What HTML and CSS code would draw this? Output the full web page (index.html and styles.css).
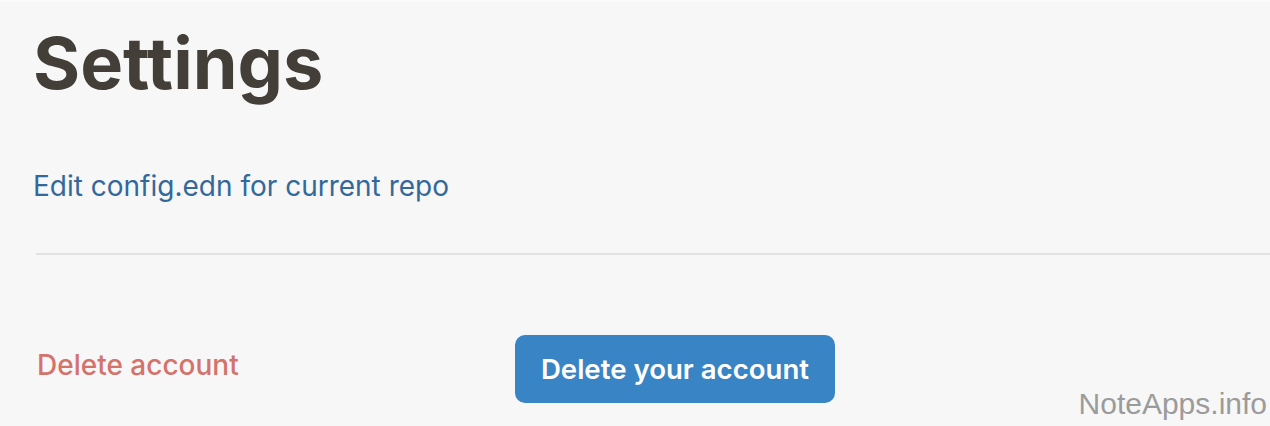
FILE: index.html
```html
<!DOCTYPE html>
<html lang="en">
<head>
<meta charset="utf-8">
<title>Settings</title>
<link rel="stylesheet" href="styles.css">
</head>
<body>
<div class="page">
  <h1 class="title">Settings</h1>
  <a class="config-link" href="#">Edit config.edn for current repo</a>
  <hr class="divider">
  <div class="row">
    <div class="row-label">Delete account</div>
    <button class="btn-danger" type="button">Delete your account</button>
  </div>
</div>
<div class="watermark">NoteApps.info</div>
</body>
</html>
```
FILE: styles.css
```css
html, body {
  margin: 0;
  padding: 0;
  height: 100%;
}
body {
  background: #f7f7f7;
  border-top: 2px solid #fbfbfb;
  box-sizing: border-box;
  font-family: Inter, "Noto Sans", sans-serif;
  overflow: hidden;
  position: relative;
}
.page {
  padding: 0 0 0 33px;
  display: flex;
  flex-direction: column;
  align-items: flex-start;
}
.title {
  margin: 0;
  padding-top: 17px;
  font-size: 72px;
  line-height: 88px;
  font-weight: 700;
  color: #433f38;
}
.config-link {
  margin-top: 61px;
  font-size: 28px;
  line-height: 36px;
  color: #33699a;
  text-decoration: none;
}
.divider {
  align-self: stretch;
  margin: 49px 0 0 3px;
  border: 0;
  border-top: 2px solid #e2e2e2;
  height: 0;
}
.row {
  display: flex;
  align-items: center;
  margin-top: 80px;
}
.row-label {
  width: 478px;
  padding-left: 4px;
  font-size: 28px;
  font-weight: 500;
  color: #d4736b;
  padding-bottom: 8px;
}
.btn-danger {
  height: 68px;
  width: 320px;
  border: 0;
  border-radius: 10px;
  background: #3884c4;
  color: #ffffff;
  font-family: Inter, "Noto Sans", sans-serif;
  font-size: 27.6px;
  font-weight: 600;
  padding: 0;
}
.watermark {
  position: absolute;
  right: 3px;
  bottom: 5px;
  font-family: "Liberation Sans", Arial, sans-serif;
  font-size: 30px;
  color: #9b9b9b;
}
```
